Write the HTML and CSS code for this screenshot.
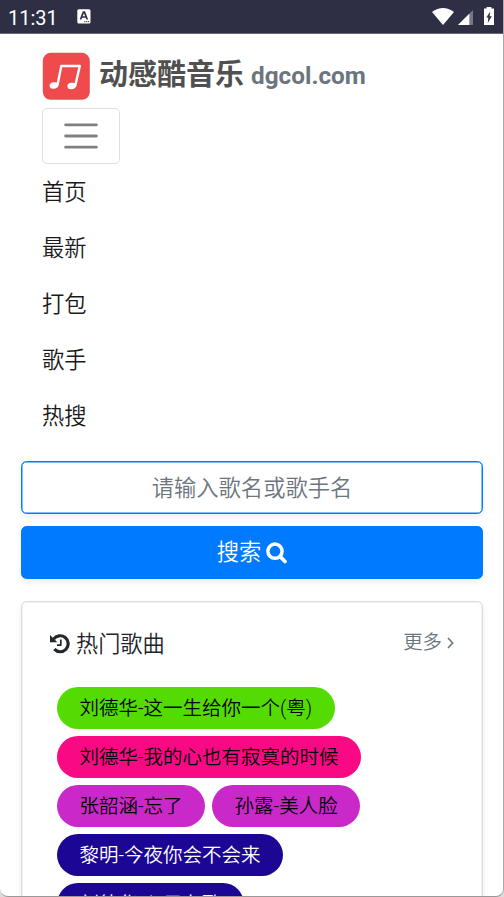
FILE: index.html
```
<!DOCTYPE html>
<html lang="zh-CN">
<head>
<meta charset="utf-8">
<title>动感酷音乐</title>
<link rel="stylesheet" href="styles.css">
</head>
<body>
<div class="device">
  <header class="statusbar">
    <span class="clock">11:31</span>
    <svg class="keyboard" width="14" height="15" viewBox="0 0 14 15"><rect x=".3" y=".3" width="13.2" height="14.2" rx="1.5" fill="#fff"/><path d="M3.5 10.5 6.4 3.2h1l2.9 7.3M4.7 8h4.4" fill="none" stroke="#2e2f45" stroke-width="1.7"/><path d="M7.3 12.7h5" stroke="#2e2f45" stroke-width="1" stroke-dasharray="1.2 .6"/></svg>
    <svg class="signals" width="64" height="20" viewBox="0 0 64 20"><path d="M0 5Q11-3.2 22 5L11 18Z" fill="#fff"/><path d="M26 18 41 3v15Z" fill="#75768a"/><path d="M26 18 37.3 6.7V18Z" fill="#fff"/><path d="M52 1.5h2.6V0h4.8v1.5H62V18H52Z" fill="#fff"/><path d="m58.2 4.5-3.9 6h2l-.5 5.6 4-6.9h-2.2Z" fill="#2e2f45"/></svg>
  </header>
  <main class="page">
    <nav class="navbar">
      <a class="brand">
        <svg class="logo" width="48" height="48" viewBox="0 0 48 48"><rect x=".8" y=".8" width="47" height="47" rx="8" fill="#ef4b4d"/><path d="M15.5 33 19.3 14h18.5l-4.5 19.5" fill="none" stroke="#fff" stroke-width="2.4" stroke-linejoin="round"/><ellipse cx="12" cy="33.5" rx="4.5" ry="3.2" fill="#fff" transform="rotate(-12 12 33.5)"/><ellipse cx="29.8" cy="34" rx="4.5" ry="3.2" fill="#fff" transform="rotate(-12 29.8 34)"/></svg>
        <span class="name">动感酷音乐</span>
        <span class="domain">dgcol.com</span>
      </a>
      <button class="toggler" aria-label="菜单"><svg width="42" height="42" viewBox="0 0 30 30"><path d="M4 7h22M4 15h22M4 23h22" stroke="#808080" stroke-width="2" stroke-linecap="round"/></svg></button>
      <ul class="menu"><li>首页</li><li>最新</li><li>打包</li><li>歌手</li><li>热搜</li></ul>
    </nav>
    <form class="search">
      <input class="field" placeholder="请输入歌名或歌手名">
      <button class="submit" type="button">搜索 <svg width="21" height="22" viewBox="0 0 21 22"><circle cx="9" cy="9.2" r="7.1" fill="none" stroke="#fff" stroke-width="3.5"/><path d="m14.2 14.6 4.8 4.9" stroke="#fff" stroke-width="3.7" stroke-linecap="round"/></svg></button>
    </form>
    <section class="card">
      <div class="heading">
        <svg width="20" height="20" viewBox="0 0 20 20"><path d="M3.6 5.2A8 8 0 1 1 4.3 15.2" fill="none" stroke="#24282d" stroke-width="3.2"/><path d="M0 1v7.3h7.3Z" fill="#24282d"/><path d="M10.8 5.5v5.7H7" fill="none" stroke="#24282d" stroke-width="1.7"/></svg>
        <h2 class="title">热门歌曲</h2>
        <a class="more">更多<svg width="7" height="12" viewBox="0 0 7 12"><path d="m1 1 4.7 5L1 11" fill="none" stroke="#6c757d" stroke-width="1.6"/></svg></a>
      </div>
      <div class="tags">
        <a class="tag green">刘德华-这一生给你一个(粤)</a>
        <a class="tag pink">刘德华-我的心也有寂寞的时候</a>
        <a class="tag purple">张韶涵-忘了</a>
        <a class="tag purple">孙露-美人脸</a>
        <a class="tag navy">黎明-今夜你会不会来</a>
        <a class="tag navy">刘德华-心只有歌</a>
      </div>
    </section>
  </main>
</div>
</body>
</html>
```
FILE: styles.css
```
* { box-sizing: border-box; }
body { margin: 0; background: #ddd; font: 350 22.3px/33.6px Roboto, "Noto Sans CJK SC", sans-serif; color: #212529; }
.device { width: 504px; height: 897px; overflow: hidden; background: #fff; border-right: 1px solid #aaa; border-bottom: 1px solid #999; border-radius: 0 0 8px 8px; }
.statusbar { display: flex; height: 34px; padding: 0 7px 0 8px; background: #2e2f45; border-bottom: 1px solid #65667a; color: #fff; }
.clock { width: 69px; font-size: 20px; font-weight: 400; line-height: 36px; }
.keyboard { margin-top: 9px; }
.signals { margin: 7px 0 0 auto; }
.page { padding: 18px 20px 0 21px; }
.navbar { padding-left: 21px; }
.brand { display: flex; height: 48px; line-height: 47px; font-weight: 700; }
.logo { margin-right: 9px; }
.name { font-size: 29px; color: #505050; margin-right: 7px; }
.domain { font-size: 24.3px; line-height: 48px; color: #6c757d; }
.toggler { display: flex; width: 78px; height: 56px; margin-top: 8px; align-items: center; justify-content: center; border: 1px solid #e0e0e0; border-radius: 5px; background: #fff; padding: 0; }
.menu { list-style: none; margin: 0; padding: 0; color: #1a1a1a; }
.menu li { height: 56px; line-height: 57px; }
.search { display: grid; gap: 12px; margin-top: 17px; }
.field, .submit { width: 100%; height: 53px; border: 1.4px solid #007bff; border-radius: 5.6px; padding: 0; font: inherit; text-align: center; box-shadow: 0 3px 6px rgba(0,0,0,.075), inset 0 0 0 .5px #007bff; }
.field::placeholder { color: #6c757d; opacity: 1; }
.submit { display: flex; align-items: center; justify-content: center; gap: 5px; background: #007bff; color: #fff; }
.card { height: 400px; margin-top: 22px; padding: 25px 28px; border: 1.4px solid #dfdfdf; border-radius: 5.6px; box-shadow: 0 3px 6px rgba(0,0,0,.075), inset 0 0 0 .5px #dfdfdf; }
.heading { display: flex; align-items: center; height: 34px; }
.title { margin: 0 auto 0 6px; font-size: 22.2px; font-weight: 350; line-height: 34px; }
.more { display: flex; align-items: center; gap: 5px; font-size: 19.4px; line-height: 32px; padding-bottom: 2px; color: #6c757d; }
.tags { display: flex; flex-wrap: wrap; gap: 7px; padding: 26px 6px 0 7px; }
.tag { height: 42px; padding: 0 22.5px; border-radius: 21px; font-size: 19.5px; line-height: 43px; color: #000; }
.green { background: #54dc02; }
.pink { background: #f90984; }
.purple { background: #ca29c9; }
.navy { background: #1c0694; color: #fff; }
```
